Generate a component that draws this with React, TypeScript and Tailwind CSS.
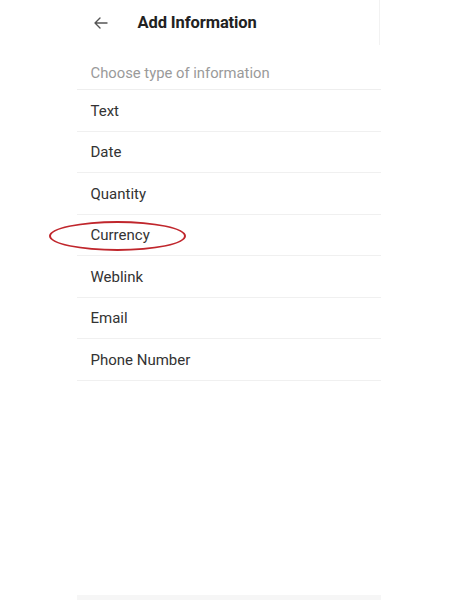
import React from "react";

const items = ["Text", "Date", "Quantity", "Currency", "Weblink", "Email", "Phone Number"];

export default function App() {
  return (
    <div className="w-[455px] h-[600px] bg-white flex justify-center overflow-hidden" style={{ fontFamily: "Roboto, 'Noto Sans', sans-serif" }}>
      <div className="relative w-[304px] ml-[2px] h-full flex flex-col">
        <div className="absolute right-[1px] top-0 w-px h-[45px] bg-[#f2f2f2]" />
        <div className="h-[46px] flex items-center pl-[16px]">
          <svg width="16" height="16" viewBox="0 0 16 16" fill="none" stroke="#555" strokeWidth="1.4" strokeLinecap="round" strokeLinejoin="round">
            <path d="M14 8H2M7 3L2 8l5 5" />
          </svg>
          <span className="ml-[29px] text-[16.5px] font-bold text-[#222] tracking-[-0.1px]">Add Information</span>
        </div>
        <div className="h-[44px] flex items-end pb-[5px] pl-[14px] text-[14.8px] text-[#9a9a9a] border-b border-[#eeeeee]">
          Choose type of information
        </div>
        {items.map((t) => (
          <div key={t} className="relative h-[41.5px] flex items-center pl-[14px] pt-[1px] text-[15px] text-[#333] border-b border-[#f0f0f0]">
            {t === "Currency" && (
              <div className="absolute left-[-28px] top-[6px] w-[137px] h-[30px] rounded-[50%] border-2 border-[#c0262c]" />
            )}
            <span className="relative">{t}</span>
          </div>
        ))}
        <div className="flex-1" />
        <div className="h-[5px] bg-[#f6f6f6] mb-0" />
      </div>
    </div>
  );
}
